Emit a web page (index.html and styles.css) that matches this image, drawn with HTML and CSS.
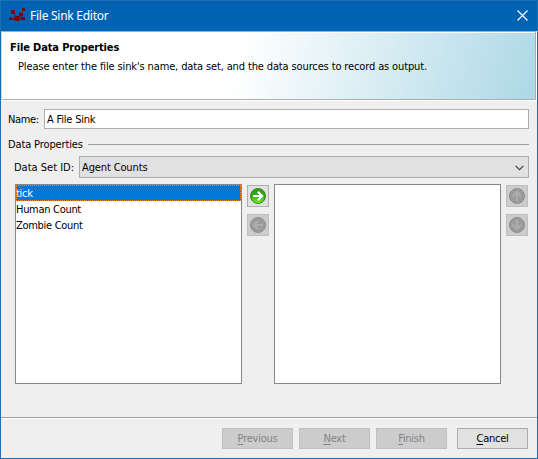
FILE: index.html
```html
<!DOCTYPE html>
<html lang="en">
<head>
<meta charset="utf-8">
<title>File Sink Editor</title>
<link rel="stylesheet" href="styles.css">
</head>
<body>
<div class="window">
  <header class="titlebar">
    <svg class="logo" width="17" height="14" viewBox="0 0 17 14"><g stroke="#711018" stroke-width="1" fill="none" opacity=".85"><path d="M3.5 3.5l4.5 6.5 5-4M2 11h6l5 .5"/></g><g fill="#78030c"><rect x="2" y="2" width="4" height="4" rx="1"/><rect x="5" y="8" width="6" height="5" rx="2"/><rect x="10" y="4.5" width="4" height="4" rx="1"/><rect x="0" y="9.5" width="4" height="2.5"/><rect x="13" y="0" width="3" height="3" rx="1"/><rect x="12" y="9" width="4" height="3"/></g></svg>
    <span class="title">File Sink Editor</span>
    <svg class="close" width="11" height="11" viewBox="0 0 11 11"><path d="M.5.5l10 10M10.5.5l-10 10" stroke="#fff" stroke-width="1.2"/></svg>
  </header>
  <section class="banner">
    <h1 class="heading">File Data Properties</h1>
    <p class="description">Please enter the file sink's name, data set, and the data sources to record as output.</p>
  </section>
  <main class="content">
    <div class="row name-row"><label class="name-label">Name:</label><div class="input"><span class="name-value">A File Sink</span></div></div>
    <div class="row group-row"><span class="group-label">Data Properties</span><i class="rule"></i></div>
    <div class="row set-row"><label class="set-label">Data Set ID:</label>
      <div class="combo"><span class="set-value">Agent Counts</span><svg width="9" height="6" viewBox="0 0 9 6"><path d="M.6.8l3.9 3.9L8.4.8" fill="none" stroke="#444" stroke-width="1.2"/></svg></div></div>
    <div class="lists">
      <div class="list"><div class="item selected"><span class="tick">tick</span></div><div class="item"><span class="human">Human Count</span></div><div class="item"><span class="zombie">Zombie Count</span></div></div>
      <div class="tools">
        <div class="tool active"><svg width="16" height="16" viewBox="0 0 16 16"><defs><linearGradient id="green" x2="0" y2="1"><stop stop-color="#3f9a2b"/><stop offset=".45" stop-color="#2fa60f"/><stop offset="1" stop-color="#72f32b"/></linearGradient></defs><circle cx="8" cy="8" r="7.5" fill="url(#green)" stroke="#23810f" stroke-width=".9"/><path d="M3 8h9M7.8 3.7L12.1 8l-4.3 4.3" fill="none" stroke="#fff" stroke-width="2.2"/></svg></div>
        <div class="tool"><svg width="16" height="16" viewBox="0 0 16 16"><circle cx="8" cy="8" r="7.5" fill="#9b9b9b" stroke="#8e8e8e"/><path d="M13 8H4M8.2 3.7L3.9 8l4.3 4.3" fill="none" stroke="#adadad" stroke-width="2.2"/></svg></div>
      </div>
      <div class="list"></div>
      <div class="tools">
        <div class="tool"><svg width="16" height="16" viewBox="0 0 16 16"><circle cx="8" cy="8" r="7.5" fill="#9b9b9b" stroke="#8e8e8e"/><path d="M8 13V4M3.7 8.2L8 3.9l4.3 4.3" fill="none" stroke="#adadad" stroke-width="2.2"/></svg></div>
        <div class="tool"><svg width="16" height="16" viewBox="0 0 16 16"><circle cx="8" cy="8" r="7.5" fill="#9b9b9b" stroke="#8e8e8e"/><path d="M8 3v9M3.7 7.8L8 12.1l4.3-4.3" fill="none" stroke="#adadad" stroke-width="2.2"/></svg></div>
      </div>
    </div>
  </main>
  <footer class="footer">
    <div class="button disabled"><span class="previous"><u>P</u>revious</span></div>
    <div class="button disabled"><span class="next"><u>N</u>ext</span></div>
    <div class="button disabled"><span class="finish"><u>F</u>inish</span></div>
    <div class="button cancel"><span class="cancel-text"><u>C</u>ancel</span></div>
  </footer>
</div>
</body>
</html>
```
FILE: styles.css
```css
* { box-sizing: border-box; }
body { margin: 0; width: 538px; height: 459px; overflow: hidden; font: 11px/14px "DejaVu Sans Condensed", "DejaVu Sans", sans-serif; font-stretch: condensed; letter-spacing: -.13px; color: #000; }
span, label, h1, p { white-space: nowrap; }
svg { display: block; flex: none; }
.window { width: 538px; height: 459px; border: 1px solid #1a6fb5; background: #efefef; display: flex; flex-direction: column; }
.titlebar { height: 30px; flex: none; background: #0063b1; display: flex; align-items: center; padding: 0 9px 2px 8px; color: #fff; }
.title { font: 12px/16px "Noto Sans", sans-serif; margin: 2px 0 0 4px; letter-spacing: -.26px; }
.close { margin-left: auto; }
.banner { height: 69px; flex: none; border: 1px solid #adadad; border-left-color: #c8d0d5; box-shadow: inset 0 1px #fff, 0 1px #fff, 1px 0 #fff; background: linear-gradient(105deg, #fff 44%, #add8e6 100%); padding: 9px 8px; margin-right: 1px; }
.heading { margin: 0; font: bold 11px/14px "DejaVu Sans Condensed", sans-serif; }
.description { margin: 5px 0 0 8px; }
.content { height: 317px; flex: none; padding: 9px 8px 0 7px; }
.row { display: flex; align-items: center; }
.name-row { height: 20px; }
.name-label { width: 36px; flex: none; letter-spacing: -.35px; padding-top: 1px; }
.input { width: 485px; height: 20px; flex: none; border: 1px solid #abadb3; background: #fff; padding: 3px 2px; }
.name-value { letter-spacing: -.2px; }
.group-row { height: 14px; margin-top: 8px; }
.group-label { width: 80px; padding-top: 2px; }
.rule { flex: 1; height: 1px; background: #a0a0a0; }
.set-row { height: 22px; margin-top: 5px; padding-left: 6px; }
.set-label { width: 65px; flex: none; padding-top: 1px; letter-spacing: 0; }
.combo { width: 450px; height: 22px; flex: none; border: 1px solid #adadad; background: #e1e1e1; display: flex; justify-content: space-between; align-items: center; padding: 1px 4px 0 2px; }
.lists { display: flex; padding-left: 7px; margin-top: 6px; }
.list { width: 227px; height: 200px; flex: none; border: 1px solid #828790; background: #fff; }
.item { height: 16px; line-height: 17px; letter-spacing: -.3px; }
.selected { background: #0078d7; color: #fff; outline: 1px dotted #ff8728; outline-offset: -1px; }
.tools { display: flex; flex-direction: column; gap: 7px; margin: 1px 5px 0 5px; }
.tool { width: 22px; height: 22px; flex: none; border: 1px solid #bfbfbf; background: #ccc; display: grid; place-items: center; }
.active { border-color: #adadad; background: #e1e1e1; }
.footer { height: 41px; flex: none; border-top: 1px solid #a0a0a0; box-shadow: inset 0 1px #fff; padding: 10px 9px 0 0; display: flex; justify-content: flex-end; gap: 6px; }
.button { width: 71px; height: 21px; border: 1px solid #adadad; background: #e1e1e1; display: grid; place-items: center; line-height: 19px; letter-spacing: -.25px; }
.disabled { border-color: #bfbfbf; background: #ccc; color: #838383; }
.cancel { margin-left: 4px; }
u { text-underline-offset: 2px; text-decoration-thickness: 1px; }
```
